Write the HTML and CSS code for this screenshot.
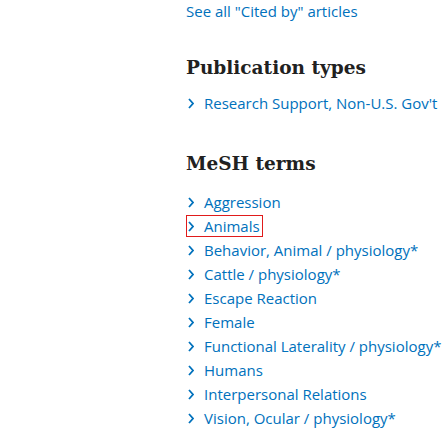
FILE: index.html
```html
<!DOCTYPE html>
<html>
<head>
<meta charset="utf-8">
<link rel="stylesheet" href="styles.css">
</head>
<body>
<div class="page">
  <a class="see-all" href="#">See all "Cited by" articles</a>

  <section class="section pub-types">
    <h2 class="heading">Publication types</h2>
    <ul class="terms">
      <li><span class="term"><svg class="chev" viewBox="0 0 6 11"><path d="M1 1 L5 5.5 L1 10"/></svg><a href="#">Research Support, Non-U.S. Gov't</a></span></li>
    </ul>
  </section>

  <section class="section mesh">
    <h2 class="heading">MeSH terms</h2>
    <ul class="terms">
      <li><span class="term"><svg class="chev" viewBox="0 0 6 11"><path d="M1 1 L5 5.5 L1 10"/></svg><a href="#">Aggression</a></span></li>
      <li><span class="term focused"><svg class="chev" viewBox="0 0 6 11"><path d="M1 1 L5 5.5 L1 10"/></svg><a href="#">Animals</a></span></li>
      <li><span class="term"><svg class="chev" viewBox="0 0 6 11"><path d="M1 1 L5 5.5 L1 10"/></svg><a href="#">Behavior, Animal / physiology*</a></span></li>
      <li><span class="term"><svg class="chev" viewBox="0 0 6 11"><path d="M1 1 L5 5.5 L1 10"/></svg><a href="#">Cattle / physiology*</a></span></li>
      <li><span class="term"><svg class="chev" viewBox="0 0 6 11"><path d="M1 1 L5 5.5 L1 10"/></svg><a href="#">Escape Reaction</a></span></li>
      <li><span class="term"><svg class="chev" viewBox="0 0 6 11"><path d="M1 1 L5 5.5 L1 10"/></svg><a href="#">Female</a></span></li>
      <li><span class="term"><svg class="chev" viewBox="0 0 6 11"><path d="M1 1 L5 5.5 L1 10"/></svg><a href="#">Functional Laterality / physiology*</a></span></li>
      <li><span class="term"><svg class="chev" viewBox="0 0 6 11"><path d="M1 1 L5 5.5 L1 10"/></svg><a href="#">Humans</a></span></li>
      <li><span class="term"><svg class="chev" viewBox="0 0 6 11"><path d="M1 1 L5 5.5 L1 10"/></svg><a href="#">Interpersonal Relations</a></span></li>
      <li><span class="term"><svg class="chev" viewBox="0 0 6 11"><path d="M1 1 L5 5.5 L1 10"/></svg><a href="#">Vision, Ocular / physiology*</a></span></li>
    </ul>
  </section>
</div>
</body>
</html>
```
FILE: styles.css
```css
html, body {
  margin: 0;
  padding: 0;
  background: #ffffff;
}
.page {
  padding: 1px 0 0 186px;
  font-family: "Open Sans", "Noto Sans", sans-serif;
  font-size: 15px;
  color: #0071bc;
  white-space: nowrap;
}
a {
  color: #0071bc;
  text-decoration: none;
}
.see-all {
  display: block;
  line-height: 20px;
}
.heading {
  margin: 0;
  font-family: "DejaVu Serif", serif;
  font-weight: bold;
  font-size: 18.5px;
  line-height: 28px;
  color: #212121;
}
.pub-types {
  margin-top: 33px;
}
.pub-types .terms {
  margin-top: 9px;
}
.mesh {
  margin-top: 35px;
}
.mesh .terms {
  margin-top: 12px;
}
.terms {
  list-style: none;
  margin: 0;
  padding: 0;
}
.terms li {
  height: 24px;
  display: flex;
  align-items: center;
}
.term {
  display: inline-flex;
  align-items: center;
  box-sizing: border-box;
  height: 22px;
  padding: 0 2px 0 1px;
  border: 1px solid transparent;
}
.term.focused {
  border-color: #e01b1b;
}
.chev {
  width: 6px;
  height: 11px;
  margin-left: 0;
  margin-right: 10px;
  fill: none;
  stroke: #0071bc;
  stroke-width: 1.8;
}
```
